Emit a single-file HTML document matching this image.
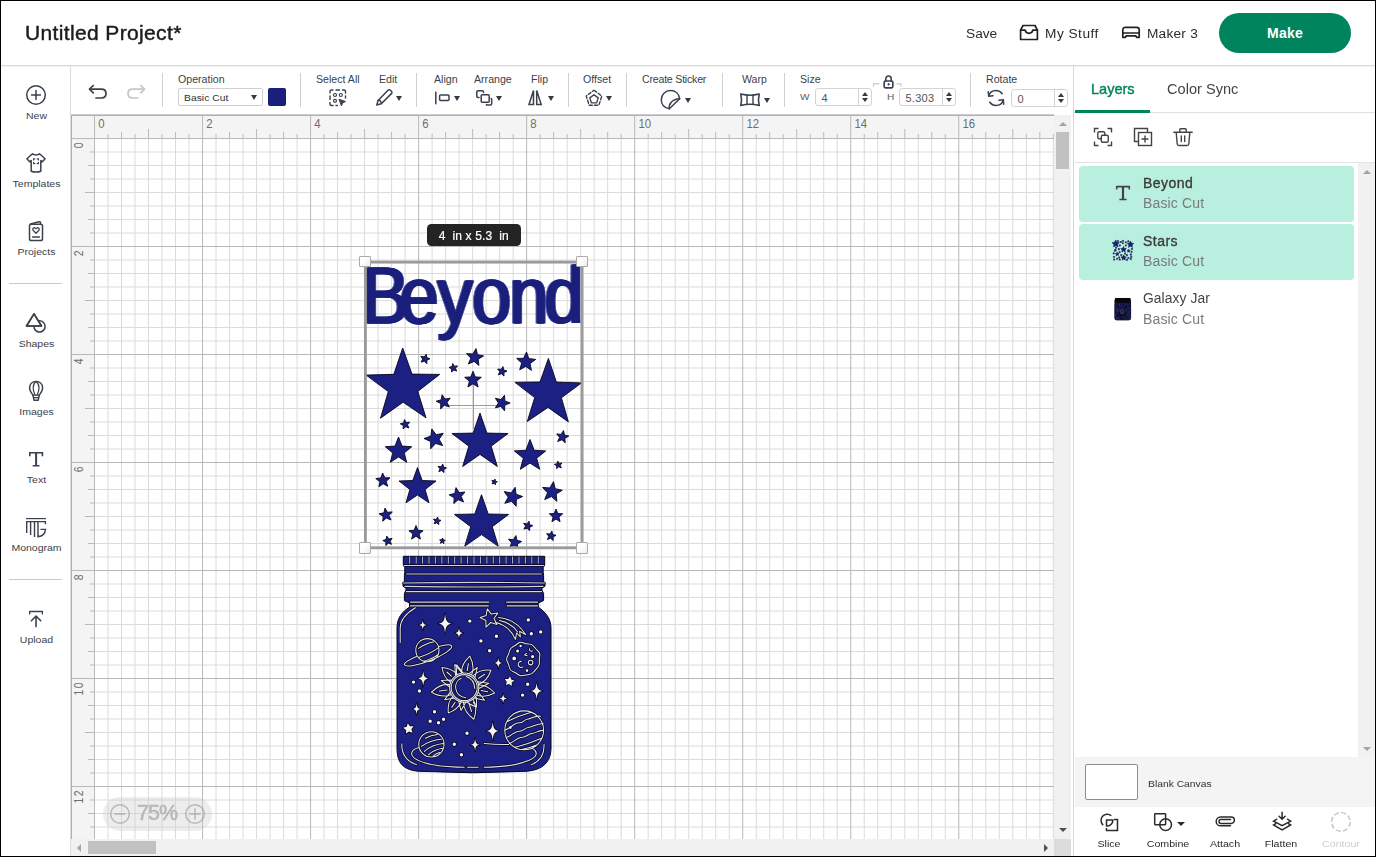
<!DOCTYPE html>
<html lang="en">
<head>
<meta charset="utf-8">
<title>Untitled Project* - Design Space</title>
<style>
*{box-sizing:border-box;margin:0;padding:0}
html,body{width:1376px;height:857px;overflow:hidden;background:#fff}
body{font-family:"Liberation Sans",Arial,sans-serif;color:#2f3540;-webkit-font-smoothing:antialiased}
#app{position:relative;width:1376px;height:857px;overflow:hidden;background:#fff}
.abs{position:absolute}
.layer{position:absolute;left:0;top:0;width:0;height:0}
.t{position:absolute;white-space:pre;line-height:1}
svg{display:block;overflow:visible}
#frame{position:absolute;left:0;top:0;width:1376px;height:857px;border:1px solid #000;border-bottom-width:1.5px;pointer-events:none;z-index:50}
/* header */
#hdr-line{position:absolute;left:1px;top:65px;width:1374px;height:1px;background:#d9d9d9;box-shadow:0 1px 1px rgba(0,0,0,.06)}
#title{will-change:transform;left:25.4px;top:22px;font-size:21px;letter-spacing:.36px;color:#1c1c1c;-webkit-text-stroke:.45px #1c1c1c}
.hl{font-size:13.7px;color:#2b2b2b;top:26.9px;will-change:transform}
#make{position:absolute;left:1219px;top:13px;width:132px;height:40px;border-radius:20px;background:#00845d;color:#fff;font-weight:700;font-size:14px;text-align:center;line-height:40px;letter-spacing:.2px}
/* sidebar */
#side-line{position:absolute;left:70px;top:66px;width:1px;height:790px;background:#dcdcdc}
.sl{position:absolute;left:1.6px;width:69px;text-align:center;font-size:9.7px;line-height:12px;color:#3a3f4a;transform:scaleX(1.085);transform-origin:50% 50%;margin-top:.9px}
.sdiv{position:absolute;left:9px;width:53px;height:1px;background:#c9c9c9}
.ic{position:absolute;stroke:#3a404c;fill:none;stroke-width:1.5;stroke-linecap:round;stroke-linejoin:round}
/* toolbar */
.tl{position:absolute;font-size:10px;line-height:12px;color:#3a3f4a;white-space:pre;transform:scaleX(1.06);transform-origin:0 50%;margin-left:-.4px}
.tsep{position:absolute;top:73px;width:1px;height:34px;background:#cfcfcf}
.car{position:absolute;width:0;height:0;border-left:3.5px solid transparent;border-right:3.5px solid transparent;border-top:5px solid #333a45}
.inp{position:absolute;height:18px;border:1px solid #d4d4d4;border-radius:3px;background:#fff;font-size:11px;line-height:18px;color:#555;padding-left:5.5px;letter-spacing:.25px}
.inp i{position:absolute;right:12px;top:0;width:1px;height:16px;background:#d4d4d4}
.inp b{position:absolute;right:3.2px;width:0;height:0;border-left:3.1px solid transparent;border-right:3.1px solid transparent}
.inp b.u{top:2.6px;border-bottom:4.6px solid #333a45}
.inp b.d{top:9.2px;border-top:4.6px solid #333a45}
/* canvas */
#canvas{position:absolute;left:0;top:0;width:0;height:0}
.rn{font-family:"Liberation Sans",Arial,sans-serif;font-size:12.4px;fill:#6e6e6e}
#cv-top{position:absolute;left:71px;top:114px;width:983px;height:2px;background:linear-gradient(#cdcdcd 0 50%,#b2b2b2 50% 100%)}
#cv-left{position:absolute;left:71px;top:115px;width:1px;height:724px;background:#b0b0b0}
/* panel */
#p-line{position:absolute;left:1073px;top:66px;width:1px;height:790px;background:#d6d6d6}
.ptab{will-change:transform;position:absolute;top:81px;font-size:15px;line-height:17px;white-space:pre}
.lay{position:absolute;left:1079px;width:275px;height:55.6px;border-radius:4px}
.lay.sel{background:#b9efde}
.ln{will-change:transform;position:absolute;left:1142.8px;font-size:14px;line-height:16px;white-space:pre;color:#3c3c3c}
.ln.b{font-weight:400;font-size:14px;letter-spacing:.48px;-webkit-text-stroke:.36px #3c3c3c;margin-top:-1px}
.ln.g{color:#7a7a7a;margin-top:-.2px;letter-spacing:.14px}
.bl{position:absolute;font-size:9.5px;line-height:12px;color:#2b2b2b;text-align:center;width:60px;white-space:pre;transform:scaleX(1.12);will-change:transform;margin-top:1.1px}
.hd{width:11.8px;height:11.8px;background:linear-gradient(135deg,#fff 40%,#ececec);border:1.5px solid #aaa;border-radius:1px}

</style>
</head>
<body>
<div id="app">
<div class="layer" id="header">
  <div class="t" id="title">Untitled Project*</div>
  <div class="t hl" style="left:966px">Save</div>
  <svg class="ic" style="left:1019px;top:24px;stroke:#222;stroke-width:1.7" width="20" height="17" viewBox="0 0 20 17"><path d="M1.6 6.2 4 1.5h12l2.4 4.7v9.3H1.6z"/><path d="M1.6 6.2h4.6c.3 2 1.8 3.1 3.8 3.1s3.5-1.1 3.8-3.1h4.6"/></svg>
  <div class="t hl" style="left:1044.8px;letter-spacing:.48px">My Stuff</div>
  <svg class="ic" style="left:1121px;top:26px;stroke:#222;stroke-width:1.7" width="20" height="13" viewBox="0 0 20 13"><path d="M1.8 7V3.8c0-1.5 1-2.5 2.5-2.5h11.4c1.5 0 2.5 1 2.5 2.5V7"/><path d="M1.8 7h16.4v4.3h-2.6l-.9-1.5H5.3l-.9 1.5H1.8z"/></svg>
  <div class="t hl" style="left:1147.4px;letter-spacing:.22px">Maker 3</div>
  <div id="make">Make</div>
  <div id="hdr-line"></div>
</div>

<div class="layer" id="sidebar">
  <div id="side-line"></div>
  <svg class="ic" style="left:25px;top:84px" width="22" height="22" viewBox="0 0 22 22"><circle cx="11" cy="11" r="9.3"/><path d="M11 6.5v9M6.5 11h9"/></svg>
  <div class="sl" style="top:109px">New</div>
  <svg class="ic" style="left:25px;top:152px" width="22" height="22" viewBox="0 0 22 22"><path d="M7.5 1.8c1 .9 2.2 1.2 3.5 1.2s2.5-.3 3.5-1.2l5.6 5-2.8 3-1.5-1.2v10.6c-1.5.6-3.1.8-4.8.8s-3.3-.2-4.8-.8V8.6L4.7 9.8l-2.8-3z"/><path d="M8.6 8v-1.2h1.2M12.2 6.8h1.2V8M13.4 10.4v1.2h-1.2M9.8 11.6H8.6v-1.2" stroke-width="1.2"/></svg>
  <div class="sl" style="top:177px">Templates</div>
  <svg class="ic" style="left:25px;top:219px" width="22" height="24" viewBox="0 0 22 24"><rect x="4.5" y="5.2" width="13" height="16.3" rx="1.8"/><path d="M5.5 5 14 2.8c.8-.2 1.4.2 1.5 1V5"/><path d="M11 14.2 8.3 11.5c-.7-.8-.6-1.8.1-2.4.8-.6 1.9-.4 2.6.6.7-1 1.8-1.2 2.6-.6.7.6.8 1.6.1 2.4z" stroke-width="1.3"/><path d="M7.5 18h7" stroke-width="1.3"/></svg>
  <div class="sl" style="top:245px">Projects</div>
  <div class="sdiv" style="top:283px"></div>
  <svg class="ic" style="left:25px;top:311px" width="22" height="24" viewBox="0 0 22 24"><circle cx="14.5" cy="15.4" r="5.6"/><path d="M9 2.8 16.5 15H1.5z" fill="#fff"/><path d="M9 2.8 16.5 15H1.5z"/></svg>
  <div class="sl" style="top:337px">Shapes</div>
  <svg class="ic" style="left:25px;top:379px;stroke-width:1.5" width="22" height="24" viewBox="0 0 22 24"><path d="M11.1 2.4c3.9 0 6.5 2.7 6.5 6.3 0 2.9-1.6 5-3.3 7.3l-1.2 5.3H9.1L7.9 16C6.2 13.7 4.6 11.6 4.6 8.7c0-3.6 2.6-6.3 6.5-6.3z"/><path d="M11.1 2.4c-2 1.4-2.9 3.8-2.9 6.3 0 2.6.8 5.2 1.8 7.3M11.1 2.4c2 1.4 2.9 3.8 2.9 6.3 0 2.6-.8 5.2-1.8 7.3" stroke-width="1.2"/><path d="M8 16.1h6.2M8.7 18.7h4.8" stroke-width="1.2"/></svg>
  <div class="sl" style="top:405px">Images</div>
  <svg class="ic" style="left:25px;top:449px;stroke-width:1.6;stroke-linecap:butt;stroke-linejoin:miter" width="22" height="22" viewBox="0 0 22 22"><path d="M4.8 7.2V3.8h12.6v3.4M7.7 16.7h6.8"/><path d="M11.1 3.8v12.9" stroke-width="2"/></svg>
  <div class="sl" style="top:473px">Text</div>
  <svg class="ic" style="left:24px;top:516px;stroke-linecap:butt;stroke-linejoin:miter;stroke-width:1.4" width="24" height="24" viewBox="0 0 24 24"><path d="M2 2.6h20" stroke-width="1.2"/><path d="M2 5.6h20M2.7 5.6v11.5M6.6 5.6v13.4M10.5 5.6v15.4M14 5.6v15.2c4.3-.6 7.2-3.5 7.5-7.4h-5M21.4 5.6v2.6"/></svg>
  <div class="sl" style="top:541px">Monogram</div>
  <div class="sdiv" style="top:579px"></div>
  <svg class="ic" style="left:25px;top:609px;stroke-width:1.6;stroke-linecap:butt;stroke-linejoin:miter" width="22" height="22" viewBox="0 0 22 22"><path d="M4.7 5.6V2.5h12.7v3.1" stroke-width="1.3"/><path d="M11.05 17.6V7.2M6.4 11.7l4.65-4.65 4.65 4.65" stroke-linecap="round" stroke-linejoin="round"/></svg>
  <div class="sl" style="top:633px">Upload</div>
</div>

<div class="layer" id="toolbar">
  <svg class="ic" style="left:87px;top:83px;stroke-width:1.7" width="22" height="18" viewBox="0 0 22 18"><path d="M6.3 2.5 2.5 6.2l3.8 3.7"/><path d="M2.8 6.2h11.7c2.8 0 4.5 1.8 4.5 4.4s-1.7 4.4-4.5 4.4H9"/></svg>
  <svg class="ic" style="left:125px;top:83px;stroke-width:1.7;stroke:#c3c5c9" width="22" height="18" viewBox="0 0 22 18"><path d="M15.7 2.5l3.8 3.7-3.8 3.7"/><path d="M19.2 6.2H7.5C4.7 6.2 3 8 3 10.6S4.7 15 7.5 15H13"/></svg>
  <div class="tsep" style="left:162px"></div>

  <div class="tl" style="left:178.5px;top:73.9px">Operation</div>
  <div class="abs" style="left:178px;top:88px;width:85px;height:18px;border:1px solid #d0d0d0;border-radius:2px;background:#fff"></div>
  <div class="tl" style="left:183.9px;top:91.9px;font-size:9.6px;transform:scaleX(1.08);color:#333">Basic Cut</div>
  <div class="car" style="left:250.5px;top:95px"></div>
  <div class="abs" style="left:268px;top:88px;width:18px;height:18px;border-radius:2px;background:#1b1f7c"></div>
  <div class="tsep" style="left:300px"></div>

  <div class="tl" style="left:316px;top:73.9px">Select All</div>
  <svg class="ic" style="left:328px;top:88px;stroke-width:1.4" width="20" height="20" viewBox="0 0 20 20"><path d="M2 5V3.5C2 2.6 2.6 2 3.5 2H5M8 2h3.5M14.5 2H16c.9 0 1.5.6 1.5 1.5V5M17.5 8v2M2 8v3.5M2 14.5V16c0 .9.6 1.5 1.5 1.5H5M8 17.5h1.5"/><circle cx="7" cy="7" r="1.5" stroke-width="1.2"/><circle cx="12.8" cy="7" r="1.5" stroke-width="1.2"/><circle cx="7" cy="12.8" r="1.5" stroke-width="1.2"/><path d="M11.3 11.3l6.2 2.3-2.7 1.1-1.2 2.8z" fill="#3a404c" stroke-width="1"/></svg>
  <div class="tl" style="left:379.5px;top:73.9px">Edit</div>
  <svg class="ic" style="left:375px;top:88px;stroke-width:1.5" width="20" height="20" viewBox="0 0 20 20"><path d="M13 2.2c.7-.7 1.7-.7 2.4 0l1 1c.7.7.7 1.7 0 2.4L6.3 15.7 1.8 17l1.3-4.5z"/><path d="M3.3 12.3c1.5-.2 2.9 1.1 3 3.2"/></svg>
  <div class="car" style="left:395.5px;top:95.5px"></div>
  <div class="tsep" style="left:416px"></div>

  <div class="tl" style="left:434px;top:73.9px">Align</div>
  <svg class="ic" style="left:433px;top:88px;stroke-width:1.5" width="20" height="20" viewBox="0 0 20 20"><path d="M2.8 4.2v11.6"/><rect x="6.6" y="7" width="9.4" height="5.6" rx="1"/></svg>
  <div class="car" style="left:453.5px;top:95.5px"></div>
  <div class="tl" style="left:474px;top:73.9px">Arrange</div>
  <svg class="ic" style="left:474px;top:88px;stroke-width:1.5" width="20" height="20" viewBox="0 0 20 20"><rect x="7.2" y="6.8" width="8" height="7.5" rx="1"/><path d="M5 9.5H4c-.8 0-1.2-.4-1.2-1.2V4c0-.8.4-1.2 1.2-1.2h4.3c.8 0 1.2.4 1.2 1.2v.6M12.5 16.5v.5h4c.8 0 1.2-.4 1.2-1.2v-4.3c0-.4-.2-.8-.5-1"/></svg>
  <div class="car" style="left:495.5px;top:95.5px"></div>
  <div class="tl" style="left:531.5px;top:73.9px">Flip</div>
  <svg class="ic" style="left:526px;top:88px;stroke-width:1.5;stroke-linejoin:miter" width="20" height="20" viewBox="0 0 20 20"><path d="M7.5 2.5v14H3zM10.7 2.5v14h4.5z"/></svg>
  <div class="car" style="left:547.5px;top:95.5px"></div>
  <div class="tsep" style="left:568px"></div>

  <div class="tl" style="left:583.5px;top:73.9px">Offset</div>
  <svg class="ic" style="left:584px;top:88px;stroke-width:1.4" width="20" height="20" viewBox="0 0 20 20"><path d="M10 2.2 17.8 8l-3 9.3H5.2L2.2 8z" stroke-dasharray="3.2 2"/><path d="M10 6.8l4.2 3.1-1.6 5H7.4l-1.6-5z"/></svg>
  <div class="car" style="left:605.5px;top:95.5px"></div>
  <div class="tsep" style="left:626px"></div>

  <div class="tl" style="left:642px;top:73.9px;letter-spacing:-.2px">Create Sticker</div>
  <svg class="ic" style="left:659px;top:88px;stroke-width:1.5" width="24" height="24" viewBox="0 0 24 24"><path d="M10.3 20.8C5.2 20 2.3 16.3 2.3 11.8 2.3 6.5 6.3 2.6 11.5 2.6c4.8 0 8.6 3 9.2 8.2z"/><path d="M10.3 20.8c-.8-4.8 2.6-9.6 10.4-10"/></svg>
  <div class="car" style="left:684.5px;top:97.5px"></div>
  <div class="tsep" style="left:722px"></div>

  <div class="tl" style="left:742px;top:73.9px">Warp</div>
  <svg class="ic" style="left:738px;top:90px;stroke-width:1.6" width="24" height="20" viewBox="0 0 24 20"><path d="M2.8 4c6.2 1.6 12.2 1.6 18.4 0-1 4-1 7.5 0 11.5-6.2-1.6-12.2-1.6-18.4 0 1-4 1-7.5 0-11.5z"/><path d="M9 5.2v9.1M15 5.2v9.1" stroke-width="1.4"/></svg>
  <div class="car" style="left:763.5px;top:97.5px"></div>
  <div class="tsep" style="left:784px"></div>

  <div class="tl" style="left:800.5px;top:73.9px">Size</div>
  <div class="tl" style="left:800.6px;top:91.4px;font-size:9.5px;color:#5c5c5c">W</div>
  <div class="inp" style="left:815px;top:88px;width:57px">4<i></i><b class="u"></b><b class="d"></b></div>
  <svg class="ic" style="left:871.6px;top:73.5px;stroke-width:1.5" width="32" height="18" viewBox="0 0 32 18"><path d="M1.5 12.5V9.8h6M29 12.5V9.8h-4.5" stroke="#bdbdbd" stroke-width="1" stroke-linecap="butt"/><rect x="12.2" y="7" width="8.6" height="6.8" rx="1.2" stroke-width="1.7"/><path d="M13.8 7V4.8c0-1.8 1.1-2.8 2.7-2.8s2.7 1 2.7 2.8V7" stroke-width="1.6"/><circle cx="16.5" cy="10.3" r=".7" fill="#3a404c" stroke-width="1"/></svg>
  <div class="tl" style="left:887.2px;top:91.4px;font-size:9.5px;color:#5c5c5c">H</div>
  <div class="inp" style="left:899px;top:88px;width:57px">5.303<i></i><b class="u"></b><b class="d"></b></div>
  <div class="tsep" style="left:970px"></div>

  <div class="tl" style="left:986.5px;top:73.9px">Rotate</div>
  <svg class="ic" style="left:986px;top:88px;stroke-width:1.5" width="20" height="20" viewBox="0 0 20 20"><path d="M2.8 8.2C3.6 4.8 6.4 2.6 10 2.6c2.6 0 4.8 1.2 6.2 3.2M17.2 11.8c-.8 3.4-3.6 5.6-7.2 5.6-2.6 0-4.8-1.2-6.2-3.2"/><path d="M2.3 3.8l.4 4.5 4.3-.6M17.7 16.2l-.4-4.5-4.3.6"/></svg>
  <div class="inp" style="left:1011px;top:89px;width:57px">0<i></i><b class="u"></b><b class="d"></b></div>
</div>

<div id="canvas">
<svg class="abs" style="left:71px;top:115px" width="983" height="724" viewBox="71 115 983 724">
<rect x="71" y="115" width="983" height="724" fill="#fff"/>
<rect x="71" y="115" width="983" height="23.5" fill="#f4f4f4"/>
<rect x="71" y="115" width="23.5" height="724" fill="#f4f4f4"/>
<path d="M108 139V839M121.51 139V839M135.01 139V839M148.52 139V839M162.02 139V839M175.53 139V839M189.03 139V839M216.04 139V839M229.55 139V839M243.05 139V839M256.55 139V839M270.06 139V839M283.56 139V839M297.07 139V839M324.08 139V839M337.58 139V839M351.09 139V839M364.59 139V839M378.09 139V839M391.6 139V839M405.1 139V839M432.11 139V839M445.62 139V839M459.12 139V839M472.63 139V839M486.13 139V839M499.63 139V839M513.14 139V839M540.15 139V839M553.65 139V839M567.16 139V839M580.66 139V839M594.17 139V839M607.67 139V839M621.18 139V839M648.18 139V839M661.69 139V839M675.19 139V839M688.7 139V839M702.2 139V839M715.71 139V839M729.21 139V839M756.22 139V839M769.73 139V839M783.23 139V839M796.73 139V839M810.24 139V839M823.74 139V839M837.25 139V839M864.26 139V839M877.76 139V839M891.27 139V839M904.77 139V839M918.27 139V839M931.78 139V839M945.28 139V839M972.29 139V839M985.8 139V839M999.3 139V839M1012.81 139V839M1026.31 139V839M1039.82 139V839M1053.32 139V839M95 152H1054M95 165.5H1054M95 179H1054M95 192.5H1054M95 206H1054M95 219.5H1054M95 233H1054M95 260H1054M95 273.5H1054M95 287H1054M95 300.5H1054M95 314H1054M95 327.5H1054M95 341H1054M95 368H1054M95 381.5H1054M95 395H1054M95 408.5H1054M95 422H1054M95 435.5H1054M95 449H1054M95 476H1054M95 489.5H1054M95 503H1054M95 516.5H1054M95 530H1054M95 543.5H1054M95 557H1054M95 584H1054M95 597.5H1054M95 611H1054M95 624.5H1054M95 638H1054M95 651.5H1054M95 665H1054M95 692H1054M95 705.5H1054M95 719H1054M95 732.5H1054M95 746H1054M95 759.5H1054M95 773H1054M95 800H1054M95 813.5H1054M95 827H1054" stroke="#dbdbdb" stroke-width="1" fill="none"/>
<path d="M108 134V138M121.51 132V138M135.01 134V138M148.52 129V138M162.02 134V138M175.53 132V138M189.03 134V138M216.04 134V138M229.55 132V138M243.05 134V138M256.55 129V138M270.06 134V138M283.56 132V138M297.07 134V138M324.08 134V138M337.58 132V138M351.09 134V138M364.59 129V138M378.09 134V138M391.6 132V138M405.1 134V138M432.11 134V138M445.62 132V138M459.12 134V138M472.63 129V138M486.13 134V138M499.63 132V138M513.14 134V138M540.15 134V138M553.65 132V138M567.16 134V138M580.66 129V138M594.17 134V138M607.67 132V138M621.18 134V138M648.18 134V138M661.69 132V138M675.19 134V138M688.7 129V138M702.2 134V138M715.71 132V138M729.21 134V138M756.22 134V138M769.73 132V138M783.23 134V138M796.73 129V138M810.24 134V138M823.74 132V138M837.25 134V138M864.26 134V138M877.76 132V138M891.27 134V138M904.77 129V138M918.27 134V138M931.78 132V138M945.28 134V138M972.29 134V138M985.8 132V138M999.3 134V138M1012.81 129V138M1026.31 134V138M1039.82 132V138M1053.32 134V138M90 152H94M88 165.5H94M90 179H94M85 192.5H94M90 206H94M88 219.5H94M90 233H94M90 260H94M88 273.5H94M90 287H94M85 300.5H94M90 314H94M88 327.5H94M90 341H94M90 368H94M88 381.5H94M90 395H94M85 408.5H94M90 422H94M88 435.5H94M90 449H94M90 476H94M88 489.5H94M90 503H94M85 516.5H94M90 530H94M88 543.5H94M90 557H94M90 584H94M88 597.5H94M90 611H94M85 624.5H94M90 638H94M88 651.5H94M90 665H94M90 692H94M88 705.5H94M90 719H94M85 732.5H94M90 746H94M88 759.5H94M90 773H94M90 800H94M88 813.5H94M90 827H94" stroke="#b9b9b9" stroke-width="1" fill="none"/>
<path d="M94.5 116V839M202.54 116V839M310.57 116V839M418.61 116V839M526.64 116V839M634.68 116V839M742.72 116V839M850.75 116V839M958.79 116V839M72 138.5H1054M72 246.5H1054M72 354.5H1054M72 462.5H1054M72 570.5H1054M72 678.5H1054M72 786.5H1054" stroke="#b9b9b9" stroke-width="1" fill="none"/>
<text transform="translate(98.2 128.2) scale(.92 1)" class="rn">0</text>
<text transform="translate(206.24 128.2) scale(.92 1)" class="rn">2</text>
<text transform="translate(314.27 128.2) scale(.92 1)" class="rn">4</text>
<text transform="translate(422.31 128.2) scale(.92 1)" class="rn">6</text>
<text transform="translate(530.34 128.2) scale(.92 1)" class="rn">8</text>
<text transform="translate(638.38 128.2) scale(.92 1)" class="rn">10</text>
<text transform="translate(746.42 128.2) scale(.92 1)" class="rn">12</text>
<text transform="translate(854.45 128.2) scale(.92 1)" class="rn">14</text>
<text transform="translate(962.49 128.2) scale(.92 1)" class="rn">16</text>
<text transform="translate(83.3 142.5) rotate(-90) scale(.84 1.06)" x="-6.9" class="rn">0</text>
<text transform="translate(83.3 250.5) rotate(-90) scale(.84 1.06)" x="-6.9" class="rn">2</text>
<text transform="translate(83.3 358.5) rotate(-90) scale(.84 1.06)" x="-6.9" class="rn">4</text>
<text transform="translate(83.3 466.5) rotate(-90) scale(.84 1.06)" x="-6.9" class="rn">6</text>
<text transform="translate(83.3 574.5) rotate(-90) scale(.84 1.06)" x="-6.9" class="rn">8</text>
<text transform="translate(83.3 682.5) rotate(-90) scale(.84 1.06)" x="-15.53 -6.9" class="rn">10</text>
<text transform="translate(83.3 790.5) rotate(-90) scale(.84 1.06)" x="-15.53 -6.9" class="rn">12</text>
</svg>
<svg class="abs" style="left:0;top:0" width="1376" height="857" viewBox="0 0 1376 857">
  <text x="414.29 457.19 500.57 539.9 582.49 622.57" y="323" transform="scale(0.875 1)" style="font-family:'Liberation Sans',Arial,sans-serif;font-weight:400;font-size:80px;filter:drop-shadow(1.2px 0 0 #1b1f7c) drop-shadow(-1.2px 0 0 #1b1f7c)" fill="#1b1f7c" stroke="#1b1f7c" stroke-width="0.8">Beyond</text>
  <path d="M473.5 380V429M449 405.5H497" stroke="#9c9c9c" stroke-width="1" fill="none"/><path d="M402.7 348L412 374.1L439.7 374.4L417.8 391.4L426 417.8L403.1 402.2L380.5 418.2L388.3 391.6L366.1 375.1L393.8 374.3ZM548.4 358.4L556.4 382.1L581.5 382.9L561.4 397.8L568.4 421.9L548 407.4L527.3 421.5L534.7 397.6L514.9 382.3L540 382ZM480 413.1L486.9 433.1L508.1 433.5L491.2 446.2L497.3 466.5L480 454.4L462.7 466.5L468.8 446.2L451.9 433.5L473.1 433.1ZM481.5 494.7L488.2 514L508.6 514.4L492.3 526.7L498.3 546.3L481.5 534.6L464.7 546.3L470.7 526.7L454.4 514.4L474.8 514ZM417.5 467.5L422.2 480.5L436 481L425.1 489.5L429 502.8L417.5 495L406 502.8L409.9 489.5L399 481L412.8 480.5ZM398.5 437L402 446.1L411.8 446.7L404.2 452.9L406.7 462.3L398.5 457L390.3 462.3L392.8 452.9L385.2 446.7L395 446.1ZM530 439.5L534.2 450.3L545.7 450.9L536.7 458.2L539.7 469.3L530 463.1L520.3 469.3L523.3 458.2L514.3 450.9L525.8 450.3ZM431.8 428.9L436.2 434.7L443.3 433.3L439.1 439.2L442.7 445.6L435.7 443.5L430.7 448.8L430.6 441.5L424 438.5L430.9 436.1ZM526.5 352L528.8 358.6L535.7 359.4L530.1 363.6L531.4 370.4L525.8 366.4L519.7 369.8L521.7 363.1L516.7 358.4L523.6 358.3ZM476 348.6L477.5 354.7L483.6 355.9L478.3 359.2L478.9 365.4L474.1 361.4L468.4 364L470.8 358.2L466.6 353.6L472.8 354ZM473 371.3L475.3 376.9L481.3 377.3L476.6 381.2L478.1 387L473 383.8L467.9 387L469.4 381.2L464.7 377.3L470.7 376.9ZM442.1 394.7L445 399L450.2 398.2L447 402.3L449.3 407L444.4 405.2L440.6 408.9L440.8 403.6L436.2 401.2L441.2 399.8ZM504.5 395.2L504.9 400.9L510.2 403L504.9 405.1L504.5 410.8L500.9 406.4L495.4 407.8L498.4 403L495.4 398.2L500.9 399.6ZM553.5 481.6L555.2 488.7L562.3 490.2L556.2 494L556.9 501.3L551.4 496.6L544.7 499.6L547.5 492.8L542.6 487.4L549.8 487.9ZM515.2 487.3L516 494.2L522.6 496.5L516.3 499.4L516.2 506.3L511.5 501.3L504.8 503.3L508.2 497.2L504.2 491.6L511 492.9ZM456 487.6L459.1 492.6L465 492L461.2 496.5L463.6 501.9L458.1 499.7L453.8 503.6L454.2 497.8L449.1 494.8L454.8 493.4ZM382.6 473L384.8 477.7L390 477.8L386.2 481.4L387.7 486.3L383.2 483.8L378.9 486.8L379.9 481.7L375.8 478.6L380.9 477.9ZM385 508.1L387.4 512.3L392.3 511.9L389 515.5L390.9 520L386.4 518.1L382.7 521.2L383.2 516.4L379.1 513.8L383.9 512.8ZM416 525.5L417.9 530.3L423.1 530.7L419.1 534L420.4 539.1L416 536.3L411.6 539.1L412.9 534L408.9 530.7L414.1 530.3ZM556 509L557.8 513.5L562.7 513.8L558.9 517L560.1 521.7L556 519.1L551.9 521.7L553.1 517L549.3 513.8L554.2 513.5ZM563.5 430.6L564.5 435L568.8 436.1L564.9 438.3L565.2 442.8L561.9 439.8L557.7 441.5L559.6 437.4L556.7 433.9L561.1 434.4ZM426.3 354.2L426.7 357.6L430 358.7L426.9 360.2L426.8 363.7L424.4 361.2L421.1 362.1L422.8 359.1L420.8 356.3L424.2 356.9ZM452.7 363.6L454.4 366.2L457.5 365.9L455.5 368.3L456.7 371.1L453.9 370L451.5 372L451.7 369L449 367.4L452 366.6ZM503 366.6L503.7 370L507 371L503.9 372.6L504 376.1L501.5 373.7L498.3 374.8L499.8 371.7L497.7 369L501.1 369.4ZM404.4 419.6L406.3 422.5L409.7 422.2L407.5 424.8L408.9 428L405.7 426.7L403.1 429L403.3 425.6L400.3 423.8L403.7 422.9ZM442.8 464.1L443.5 467.1L446.5 467.9L443.8 469.5L444 472.5L441.6 470.5L438.8 471.6L440 468.8L438 466.4L441.1 466.7ZM495.1 479.1L495.3 481.2L497.3 481.8L495.4 482.7L495.4 484.8L494 483.3L492 483.9L493 482.1L491.8 480.4L493.8 480.7ZM557.7 461.1L559.2 463.4L561.9 463.1L560.2 465.3L561.3 467.8L558.7 466.8L556.6 468.6L556.8 465.8L554.4 464.4L557.1 463.7ZM437.7 517.1L438.3 519.7L441 520.4L438.6 521.8L438.8 524.6L436.7 522.8L434.1 523.8L435.2 521.3L433.5 519.1L436.2 519.4ZM386.8 536.1L388.7 538.9L392.1 538.5L390 541.2L391.5 544.3L388.3 543.2L385.8 545.6L385.9 542.1L382.8 540.5L386.1 539.5ZM442.7 538L443.3 540L445.3 540.3L443.6 541.5L443.9 543.6L442.3 542.3L440.4 543.3L441.1 541.3L439.6 539.8L441.7 539.8ZM515.9 535.6L517 540.3L521.6 541.5L517.5 544L517.8 548.8L514.2 545.6L509.7 547.4L511.6 542.9L508.5 539.2L513.3 539.7ZM529.1 521.2L529.5 524.6L532.8 525.7L529.7 527.2L529.6 530.7L527.2 528.2L523.9 529.1L525.6 526.1L523.6 523.3L527 523.9ZM551.9 531.1L552.6 534.4L556 535.3L553 537.1L553.2 540.5L550.6 538.2L547.4 539.5L548.8 536.3L546.6 533.7L550 534Z" fill="#1c2082" stroke="#06071f" stroke-width="0.9" stroke-linejoin="miter"/>
  <g id="jar">
<path d="M403.3 556.3H544.7V564.6L543.2 566.6V572.4L543.6 575.4V581.2L545 583.6V586.2L542 587.6V590.4L543.6 593.4V600.6L538.2 603V607C545 612 551 618 551 628V748C551 762 543 770 526 771.3Q472.5 774.2 419 771.3C402 770 397 762 397 748V628C397 618 402 612 409.6 607V603L404.4 600.6V593.4L406 590.4V587.6L403 586.2V583.6L404.4 581.2V575.4L404.8 572.4V566.6L403.3 564.6Z" fill="#1c2082" stroke="#05051a" stroke-width="1" stroke-linejoin="round"/>
<path d="M409.7 556.6V563.6M416.2 556.6V563.6M422.6 556.6V563.6M429 556.6V563.6M435.4 556.6V563.6M441.9 556.6V563.6M448.3 556.6V563.6M454.7 556.6V563.6M461.1 556.6V563.6M467.6 556.6V563.6M474 556.6V563.6M480.4 556.6V563.6M486.9 556.6V563.6M493.3 556.6V563.6M499.7 556.6V563.6M506.1 556.6V563.6M512.6 556.6V563.6M519 556.6V563.6M525.4 556.6V563.6M531.8 556.6V563.6M538.3 556.6V563.6" stroke="#05051a" stroke-width="2.1" fill="none"/>
<path d="M409.7 556.6V563.6M416.2 556.6V563.6M422.6 556.6V563.6M429 556.6V563.6M435.4 556.6V563.6M441.9 556.6V563.6M448.3 556.6V563.6M454.7 556.6V563.6M461.1 556.6V563.6M467.6 556.6V563.6M474 556.6V563.6M480.4 556.6V563.6M486.9 556.6V563.6M493.3 556.6V563.6M499.7 556.6V563.6M506.1 556.6V563.6M512.6 556.6V563.6M519 556.6V563.6M525.4 556.6V563.6M531.8 556.6V563.6M538.3 556.6V563.6" stroke="#d4d4d8" stroke-width=".9" fill="none"/>
<path d="M404.4 565.5H543.6M406.6 574H541.4M403.6 583Q474 581.6 544.4 583M405 586.4Q474 587.6 543 586.4M406.4 591.6H541.6M410.4 602.1H489M506.6 602.1H537.6M410.4 605.9H488.4M507.2 605.9H537.6" stroke="#05051a" stroke-width="2.6" fill="none" stroke-linecap="round"/>
<path d="M404.4 565.5H543.6M406.6 574H541.4M403.6 583Q474 581.6 544.4 583M405 586.4Q474 587.6 543 586.4M406.4 591.6H541.6M410.4 602.1H489M506.6 602.1H537.6M410.4 605.9H488.4M507.2 605.9H537.6" stroke="#d6d6d6" stroke-width="1.15" fill="none" stroke-linecap="round"/>
<path d="M415.4 607.8C405 614 400.4 620 400.2 628V642.6M401.8 743.8C401.6 752 404.6 760.6 416.4 764.6M544 744.4C544.4 752 542 760.6 531.2 764.8M419 747.6C411 749.6 409.6 754.4 414.6 758.4C424 764.6 444 767 464.2 767.3M467.6 767.3H478.2M484.2 767.3C502 767 518 765 528.6 760.6C537 757 538.6 752.4 532.8 748.6M484.2 743.4Q496 744.6 508.6 744.4M487.3 608.9L491.3 614.1L497.7 613.1L494 618.5L497 624.4L490.7 622.5L486 627.1L485.9 620.5L480 617.5L486.2 615.4ZM498.6 617.4C510 618.4 519 624 525.6 634.6L519.6 631.2 520.4 637 516.6 633 515.4 639.4C511.6 630.6 505 624.6 495.2 622.2M499.6 620.4C507.6 622 513.4 626 517.6 632M415.8 650.2a11.6 11.6 0 1 0 23.2 0a11.6 11.6 0 1 0 -23.2 0ZM416.4 656.4C409 659.6 403.6 663 404.4 664.8C405.6 667.4 418 665.4 431 660.2C444 655 452.6 648.6 451.6 646C450.8 644.2 445.6 644.6 438.6 646.4M418.6 648.4Q426 643.2 433.6 642M418.4 657.4Q430 654 438.6 647.6M423.4 661.2Q433 658.8 438.2 654.4M449.6 687.6a14.6 14.6 0 1 0 29.2 0a14.6 14.6 0 1 0 -29.2 0ZM451.2 687.6a13 13 0 1 0 26 0a13 13 0 1 0 -26 0ZM461.2 678.2C453.2 681.6 453.2 695.6 465.8 697.8M466.2 676.6C472.2 678.6 474.6 683.6 474.8 688.6M461.6 672.6Q461.2 664 469.8 656.1Q475.1 666.4 471.8 674.4M467.2 670.7L468.4 663.5M473.4 675.5Q479.4 669.3 491 670.2Q487.1 681.1 479 684.1M478.6 678.2L484.7 674.3M479.2 685Q487.3 684.9 494.7 693Q485 698 477.4 695.2M481.1 690.6L487.7 691.7M476.1 697Q476.9 701.7 476.4 707.1Q471.3 705.2 467.4 702.5M473.3 702.2L474.5 704.1M473.3 699.8Q478.1 707.6 473.8 719.2Q463.8 712 463.5 702.8M469.2 704L471.5 711.5M461 702.5Q457.9 709.4 448.3 713Q447.3 702.8 452.3 697M455.1 702.2L451.8 707.4M450.8 694.7Q442.3 698.2 431.5 692.2Q440.2 683.4 449.3 684.5M447.2 690L439.5 691.1M450.1 681.9Q443.8 677.6 441.9 667.5Q452.1 668.4 457 674.2M451.4 676.1L446.9 672M456.4 674.5L456.8 664.8L462.8 672.5M469.4 673.3L477.3 667.5L475.1 677M478.2 681.7L488.8 683.3L479.4 688.3M478.6 692.6L484.6 700.3L475 698.3M465.5 702.7L461 710.4L458.8 701.8M453.4 698.3L444.7 699.8L449.8 692.6M449 686.5L441.2 680.6L451 680M455.5 675.1L454.8 664.4L461.8 672.6M539.7 656.1Q539.1 659.2 539.4 662.2Q539.6 665.1 537.7 667.3Q535.7 669.5 533.8 671.8Q532 674.1 529.1 674.5Q526.2 674.9 523.3 675.6Q520.4 676.4 518 674.5Q515.7 672.6 512.8 671.6Q509.9 670.5 509.4 667.5Q508.9 664.5 507.4 661.8Q505.9 659.2 507.4 656.6Q508.9 653.9 509.5 651Q510.2 648.2 512.9 646.8Q515.5 645.5 517.9 643.5Q520.3 641.5 523.2 642.7Q526.1 643.9 529.1 644.1Q532.1 644.2 533.9 646.5Q535.7 648.9 538 651Q540.4 653 539.7 656.1ZM528.3 662.6a2.3 2.3 0 1 0 4.6 0a2.3 2.3 0 1 0 -4.6 0ZM521.4 661.4a3 3 0 1 0 1.6 5.4M526.6 653.4l-2 1.6 2.6.8M529.6 648.8a1.8 1.8 0 0 0 2.8 2M504.8 730.3a19.4 19.4 0 1 0 38.8 0a19.4 19.4 0 1 0 -38.8 0ZM507.2 721.6Q518 716 530.6 712.6M505.4 730C512 727 515 722.4 519.4 722.8C523 723 524 719.4 528 719C532 718.6 533.6 715.4 540.6 716.2M506.4 737.6C512 735.4 515 731 519.4 731.2C523 731.4 525 727.6 529 727.2C533 726.8 536 723.6 543 723.4M509.4 743.6C515 741 518 737 522.4 737.2C526 737.4 528 734 532 733.6C536 733.2 538 730 543.4 730.4M514.4 747.4Q528 744 541 738.4M521.6 749.4Q530 748 536.6 745M418.8 744.4a12.6 12.6 0 1 0 25.2 0a12.6 12.6 0 1 0 -25.2 0ZM425.4 738.2Q431 735.4 437.4 734.6M421.4 746.4Q430 740 441.4 739.2M424.4 751.4Q432 744.6 443.4 743.6M428.4 754.8Q434 749.4 443 748.2M433 756.4Q436.4 753 439.6 752.4" stroke="#05051a" stroke-width="2.5" fill="none" stroke-linecap="round" stroke-linejoin="round"/>
<path d="M422.8 620.1C423.1 623.7 423.9 624.7 426.8 625.1C423.9 625.5 423.1 626.5 422.8 630.1C422.5 626.5 421.7 625.5 418.8 625.1C421.7 624.7 422.5 623.7 422.8 620.1ZM445.1 613.4C445.6 620.7 447 622.8 451.9 623.6C447 624.4 445.6 626.5 445.1 633.8C444.6 626.5 443.2 624.4 438.3 623.6C443.2 622.8 444.6 620.7 445.1 613.4ZM459 627.5C459.3 631.5 460.2 632.7 463.3 633.1C460.2 633.5 459.3 634.7 459 638.7C458.7 634.7 457.8 633.5 454.7 633.1C457.8 632.7 458.7 631.5 459 627.5ZM498.3 657.4C498.6 661.3 499.4 662.5 502.3 662.9C499.4 663.3 498.6 664.5 498.3 668.4C498 664.5 497.2 663.3 494.3 662.9C497.2 662.5 498 661.3 498.3 657.4ZM423.2 670.6C423.6 676.3 424.8 678 428.7 678.6C424.8 679.2 423.6 680.9 423.2 686.6C422.8 680.9 421.6 679.2 417.7 678.6C421.6 678 422.8 676.3 423.2 670.6ZM536.6 682.6C537.1 688.7 538.3 690.4 542.6 691.1C538.3 691.8 537.1 693.5 536.6 699.6C536.1 693.5 534.9 691.8 530.6 691.1C534.9 690.4 536.1 688.7 536.6 682.6ZM503.2 693.4C503.5 697 504.3 698 507.2 698.4C504.3 698.8 503.5 699.8 503.2 703.4C502.9 699.8 502.1 698.8 499.2 698.4C502.1 698 502.9 697 503.2 693.4ZM416.6 702.9C416.9 707.2 417.7 708.4 420.6 708.9C417.7 709.4 416.9 710.6 416.6 714.9C416.3 710.6 415.5 709.4 412.6 708.9C415.5 708.4 416.3 707.2 416.6 702.9ZM492.7 721.4C493.2 728.2 494.6 730.2 499.2 730.9C494.6 731.6 493.2 733.6 492.7 740.4C492.2 733.6 490.8 731.6 486.2 730.9C490.8 730.2 492.2 728.2 492.7 721.4ZM475.1 738.3C475.5 742.9 476.4 744.3 479.6 744.8C476.4 745.3 475.5 746.7 475.1 751.3C474.7 746.7 473.8 745.3 470.6 744.8C473.8 744.3 474.7 742.9 475.1 738.3ZM468.1 621.1a1.7 1.7 0 1 0 3.4 0a1.7 1.7 0 1 0 -3.4 0ZM494.7 636.2a1.7 1.7 0 1 0 3.4 0a1.7 1.7 0 1 0 -3.4 0ZM479.2 640.9a1.7 1.7 0 1 0 3.4 0a1.7 1.7 0 1 0 -3.4 0ZM487.9 650.8a1.7 1.7 0 1 0 3.4 0a1.7 1.7 0 1 0 -3.4 0ZM526.6 619.9a1.7 1.7 0 1 0 3.4 0a1.7 1.7 0 1 0 -3.4 0ZM529.6 633.8a1.7 1.7 0 1 0 3.4 0a1.7 1.7 0 1 0 -3.4 0ZM539 631.9a1.7 1.7 0 1 0 3.4 0a1.7 1.7 0 1 0 -3.4 0ZM411.8 682.1a1.7 1.7 0 1 0 3.4 0a1.7 1.7 0 1 0 -3.4 0ZM417.7 691a1.7 1.7 0 1 0 3.4 0a1.7 1.7 0 1 0 -3.4 0ZM526 684.2a1.7 1.7 0 1 0 3.4 0a1.7 1.7 0 1 0 -3.4 0ZM520.9 695.1a1.7 1.7 0 1 0 3.4 0a1.7 1.7 0 1 0 -3.4 0ZM432.8 711.8a1.7 1.7 0 1 0 3.4 0a1.7 1.7 0 1 0 -3.4 0ZM428.5 721.3a1.7 1.7 0 1 0 3.4 0a1.7 1.7 0 1 0 -3.4 0ZM436.8 722.7a1.7 1.7 0 1 0 3.4 0a1.7 1.7 0 1 0 -3.4 0ZM441.9 719.2a1.7 1.7 0 1 0 3.4 0a1.7 1.7 0 1 0 -3.4 0ZM465.3 733.2a1.7 1.7 0 1 0 3.4 0a1.7 1.7 0 1 0 -3.4 0ZM452.6 744.2a1.7 1.7 0 1 0 3.4 0a1.7 1.7 0 1 0 -3.4 0ZM459.7 754.7a1.7 1.7 0 1 0 3.4 0a1.7 1.7 0 1 0 -3.4 0ZM510.1 676.3L511.2 679.5L514.5 680.5L511.7 682.5L511.8 686L509 684L505.8 685.1L506.8 681.9L504.7 679.1L508.2 679.1ZM407.8 723.2L409.9 726.2L413.6 726.2L411.4 729.2L412.5 732.7L409 731.5L406 733.6L406.1 729.9L403.1 727.7L406.7 726.7ZM512.3 658.4a1.9 1.9 0 1 0 3.8 0a1.9 1.9 0 1 0 -3.8 0ZM516.1 651a1.5 1.5 0 1 0 3 0a1.5 1.5 0 1 0 -3 0ZM531 656.6a1.6 1.6 0 1 0 3.2 0a1.6 1.6 0 1 0 -3.2 0ZM525.7 670.6a1.3 1.3 0 1 0 2.6 0a1.3 1.3 0 1 0 -2.6 0ZM519.4 646a1.2 1.2 0 1 0 2.4 0a1.2 1.2 0 1 0 -2.4 0ZM509.1 727.6a1.3 1.3 0 1 0 2.6 0a1.3 1.3 0 1 0 -2.6 0Z" fill="#05051a" stroke="#05051a" stroke-width="1.5" stroke-linejoin="round"/>
<path d="M415.4 607.8C405 614 400.4 620 400.2 628V642.6M401.8 743.8C401.6 752 404.6 760.6 416.4 764.6M544 744.4C544.4 752 542 760.6 531.2 764.8M419 747.6C411 749.6 409.6 754.4 414.6 758.4C424 764.6 444 767 464.2 767.3M467.6 767.3H478.2M484.2 767.3C502 767 518 765 528.6 760.6C537 757 538.6 752.4 532.8 748.6M484.2 743.4Q496 744.6 508.6 744.4M487.3 608.9L491.3 614.1L497.7 613.1L494 618.5L497 624.4L490.7 622.5L486 627.1L485.9 620.5L480 617.5L486.2 615.4ZM498.6 617.4C510 618.4 519 624 525.6 634.6L519.6 631.2 520.4 637 516.6 633 515.4 639.4C511.6 630.6 505 624.6 495.2 622.2M499.6 620.4C507.6 622 513.4 626 517.6 632M415.8 650.2a11.6 11.6 0 1 0 23.2 0a11.6 11.6 0 1 0 -23.2 0ZM416.4 656.4C409 659.6 403.6 663 404.4 664.8C405.6 667.4 418 665.4 431 660.2C444 655 452.6 648.6 451.6 646C450.8 644.2 445.6 644.6 438.6 646.4M418.6 648.4Q426 643.2 433.6 642M418.4 657.4Q430 654 438.6 647.6M423.4 661.2Q433 658.8 438.2 654.4M449.6 687.6a14.6 14.6 0 1 0 29.2 0a14.6 14.6 0 1 0 -29.2 0ZM451.2 687.6a13 13 0 1 0 26 0a13 13 0 1 0 -26 0ZM461.2 678.2C453.2 681.6 453.2 695.6 465.8 697.8M466.2 676.6C472.2 678.6 474.6 683.6 474.8 688.6M461.6 672.6Q461.2 664 469.8 656.1Q475.1 666.4 471.8 674.4M467.2 670.7L468.4 663.5M473.4 675.5Q479.4 669.3 491 670.2Q487.1 681.1 479 684.1M478.6 678.2L484.7 674.3M479.2 685Q487.3 684.9 494.7 693Q485 698 477.4 695.2M481.1 690.6L487.7 691.7M476.1 697Q476.9 701.7 476.4 707.1Q471.3 705.2 467.4 702.5M473.3 702.2L474.5 704.1M473.3 699.8Q478.1 707.6 473.8 719.2Q463.8 712 463.5 702.8M469.2 704L471.5 711.5M461 702.5Q457.9 709.4 448.3 713Q447.3 702.8 452.3 697M455.1 702.2L451.8 707.4M450.8 694.7Q442.3 698.2 431.5 692.2Q440.2 683.4 449.3 684.5M447.2 690L439.5 691.1M450.1 681.9Q443.8 677.6 441.9 667.5Q452.1 668.4 457 674.2M451.4 676.1L446.9 672M456.4 674.5L456.8 664.8L462.8 672.5M469.4 673.3L477.3 667.5L475.1 677M478.2 681.7L488.8 683.3L479.4 688.3M478.6 692.6L484.6 700.3L475 698.3M465.5 702.7L461 710.4L458.8 701.8M453.4 698.3L444.7 699.8L449.8 692.6M449 686.5L441.2 680.6L451 680M455.5 675.1L454.8 664.4L461.8 672.6M539.7 656.1Q539.1 659.2 539.4 662.2Q539.6 665.1 537.7 667.3Q535.7 669.5 533.8 671.8Q532 674.1 529.1 674.5Q526.2 674.9 523.3 675.6Q520.4 676.4 518 674.5Q515.7 672.6 512.8 671.6Q509.9 670.5 509.4 667.5Q508.9 664.5 507.4 661.8Q505.9 659.2 507.4 656.6Q508.9 653.9 509.5 651Q510.2 648.2 512.9 646.8Q515.5 645.5 517.9 643.5Q520.3 641.5 523.2 642.7Q526.1 643.9 529.1 644.1Q532.1 644.2 533.9 646.5Q535.7 648.9 538 651Q540.4 653 539.7 656.1ZM528.3 662.6a2.3 2.3 0 1 0 4.6 0a2.3 2.3 0 1 0 -4.6 0ZM521.4 661.4a3 3 0 1 0 1.6 5.4M526.6 653.4l-2 1.6 2.6.8M529.6 648.8a1.8 1.8 0 0 0 2.8 2M504.8 730.3a19.4 19.4 0 1 0 38.8 0a19.4 19.4 0 1 0 -38.8 0ZM507.2 721.6Q518 716 530.6 712.6M505.4 730C512 727 515 722.4 519.4 722.8C523 723 524 719.4 528 719C532 718.6 533.6 715.4 540.6 716.2M506.4 737.6C512 735.4 515 731 519.4 731.2C523 731.4 525 727.6 529 727.2C533 726.8 536 723.6 543 723.4M509.4 743.6C515 741 518 737 522.4 737.2C526 737.4 528 734 532 733.6C536 733.2 538 730 543.4 730.4M514.4 747.4Q528 744 541 738.4M521.6 749.4Q530 748 536.6 745M418.8 744.4a12.6 12.6 0 1 0 25.2 0a12.6 12.6 0 1 0 -25.2 0ZM425.4 738.2Q431 735.4 437.4 734.6M421.4 746.4Q430 740 441.4 739.2M424.4 751.4Q432 744.6 443.4 743.6M428.4 754.8Q434 749.4 443 748.2M433 756.4Q436.4 753 439.6 752.4" stroke="#e6e6e6" stroke-width="1.05" fill="none" stroke-linecap="round" stroke-linejoin="round"/>
<path d="M422.8 620.1C423.1 623.7 423.9 624.7 426.8 625.1C423.9 625.5 423.1 626.5 422.8 630.1C422.5 626.5 421.7 625.5 418.8 625.1C421.7 624.7 422.5 623.7 422.8 620.1ZM445.1 613.4C445.6 620.7 447 622.8 451.9 623.6C447 624.4 445.6 626.5 445.1 633.8C444.6 626.5 443.2 624.4 438.3 623.6C443.2 622.8 444.6 620.7 445.1 613.4ZM459 627.5C459.3 631.5 460.2 632.7 463.3 633.1C460.2 633.5 459.3 634.7 459 638.7C458.7 634.7 457.8 633.5 454.7 633.1C457.8 632.7 458.7 631.5 459 627.5ZM498.3 657.4C498.6 661.3 499.4 662.5 502.3 662.9C499.4 663.3 498.6 664.5 498.3 668.4C498 664.5 497.2 663.3 494.3 662.9C497.2 662.5 498 661.3 498.3 657.4ZM423.2 670.6C423.6 676.3 424.8 678 428.7 678.6C424.8 679.2 423.6 680.9 423.2 686.6C422.8 680.9 421.6 679.2 417.7 678.6C421.6 678 422.8 676.3 423.2 670.6ZM536.6 682.6C537.1 688.7 538.3 690.4 542.6 691.1C538.3 691.8 537.1 693.5 536.6 699.6C536.1 693.5 534.9 691.8 530.6 691.1C534.9 690.4 536.1 688.7 536.6 682.6ZM503.2 693.4C503.5 697 504.3 698 507.2 698.4C504.3 698.8 503.5 699.8 503.2 703.4C502.9 699.8 502.1 698.8 499.2 698.4C502.1 698 502.9 697 503.2 693.4ZM416.6 702.9C416.9 707.2 417.7 708.4 420.6 708.9C417.7 709.4 416.9 710.6 416.6 714.9C416.3 710.6 415.5 709.4 412.6 708.9C415.5 708.4 416.3 707.2 416.6 702.9ZM492.7 721.4C493.2 728.2 494.6 730.2 499.2 730.9C494.6 731.6 493.2 733.6 492.7 740.4C492.2 733.6 490.8 731.6 486.2 730.9C490.8 730.2 492.2 728.2 492.7 721.4ZM475.1 738.3C475.5 742.9 476.4 744.3 479.6 744.8C476.4 745.3 475.5 746.7 475.1 751.3C474.7 746.7 473.8 745.3 470.6 744.8C473.8 744.3 474.7 742.9 475.1 738.3ZM468.1 621.1a1.7 1.7 0 1 0 3.4 0a1.7 1.7 0 1 0 -3.4 0ZM494.7 636.2a1.7 1.7 0 1 0 3.4 0a1.7 1.7 0 1 0 -3.4 0ZM479.2 640.9a1.7 1.7 0 1 0 3.4 0a1.7 1.7 0 1 0 -3.4 0ZM487.9 650.8a1.7 1.7 0 1 0 3.4 0a1.7 1.7 0 1 0 -3.4 0ZM526.6 619.9a1.7 1.7 0 1 0 3.4 0a1.7 1.7 0 1 0 -3.4 0ZM529.6 633.8a1.7 1.7 0 1 0 3.4 0a1.7 1.7 0 1 0 -3.4 0ZM539 631.9a1.7 1.7 0 1 0 3.4 0a1.7 1.7 0 1 0 -3.4 0ZM411.8 682.1a1.7 1.7 0 1 0 3.4 0a1.7 1.7 0 1 0 -3.4 0ZM417.7 691a1.7 1.7 0 1 0 3.4 0a1.7 1.7 0 1 0 -3.4 0ZM526 684.2a1.7 1.7 0 1 0 3.4 0a1.7 1.7 0 1 0 -3.4 0ZM520.9 695.1a1.7 1.7 0 1 0 3.4 0a1.7 1.7 0 1 0 -3.4 0ZM432.8 711.8a1.7 1.7 0 1 0 3.4 0a1.7 1.7 0 1 0 -3.4 0ZM428.5 721.3a1.7 1.7 0 1 0 3.4 0a1.7 1.7 0 1 0 -3.4 0ZM436.8 722.7a1.7 1.7 0 1 0 3.4 0a1.7 1.7 0 1 0 -3.4 0ZM441.9 719.2a1.7 1.7 0 1 0 3.4 0a1.7 1.7 0 1 0 -3.4 0ZM465.3 733.2a1.7 1.7 0 1 0 3.4 0a1.7 1.7 0 1 0 -3.4 0ZM452.6 744.2a1.7 1.7 0 1 0 3.4 0a1.7 1.7 0 1 0 -3.4 0ZM459.7 754.7a1.7 1.7 0 1 0 3.4 0a1.7 1.7 0 1 0 -3.4 0ZM510.1 676.3L511.2 679.5L514.5 680.5L511.7 682.5L511.8 686L509 684L505.8 685.1L506.8 681.9L504.7 679.1L508.2 679.1ZM407.8 723.2L409.9 726.2L413.6 726.2L411.4 729.2L412.5 732.7L409 731.5L406 733.6L406.1 729.9L403.1 727.7L406.7 726.7ZM512.3 658.4a1.9 1.9 0 1 0 3.8 0a1.9 1.9 0 1 0 -3.8 0ZM516.1 651a1.5 1.5 0 1 0 3 0a1.5 1.5 0 1 0 -3 0ZM531 656.6a1.6 1.6 0 1 0 3.2 0a1.6 1.6 0 1 0 -3.2 0ZM525.7 670.6a1.3 1.3 0 1 0 2.6 0a1.3 1.3 0 1 0 -2.6 0ZM519.4 646a1.2 1.2 0 1 0 2.4 0a1.2 1.2 0 1 0 -2.4 0ZM509.1 727.6a1.3 1.3 0 1 0 2.6 0a1.3 1.3 0 1 0 -2.6 0Z" fill="#f4f4f2"/>
</g>
</svg>

<!-- selection box -->
<svg class="abs" style="left:0;top:0" width="1376" height="857" viewBox="0 0 1376 857"><rect x="365.4" y="262.1" width="216.7" height="285.7" fill="none" stroke="#9b9b9b" stroke-width="2.9"/></svg>
<div class="abs hd" style="left:359.3px;top:255.6px"></div>
<div class="abs hd" style="left:575.9px;top:255.6px"></div>
<div class="abs hd" style="left:359.3px;top:542px"></div>
<div class="abs hd" style="left:575.9px;top:542px"></div>
<div class="abs" style="left:426.5px;top:224.4px;width:94.6px;height:21.3px;border-radius:4.5px;background:#242424;color:#fff;font-size:12px;line-height:25.4px;letter-spacing:.13px;overflow:hidden;text-align:center;white-space:pre;-webkit-text-stroke:.2px #fff">4  in x 5.3  in</div>
<!-- scrollbars -->
<div class="abs" style="left:1054px;top:115px;width:17px;height:741px;background:#f1f1f1"></div>
<div class="abs" style="left:1058.5px;top:122px;width:0;height:0;border-left:4px solid transparent;border-right:4px solid transparent;border-bottom:4.5px solid #a3a3a3"></div>
<div class="abs" style="left:1056px;top:132px;width:13px;height:37px;background:#c1c1c1"></div>
<div class="abs" style="left:1058.5px;top:828px;width:0;height:0;border-left:4px solid transparent;border-right:4px solid transparent;border-top:4.5px solid #505050"></div>
<div class="abs" style="left:71px;top:839px;width:983px;height:17px;background:#f1f1f1"></div>
<div class="abs" style="left:76.5px;top:843.5px;width:0;height:0;border-top:4px solid transparent;border-bottom:4px solid transparent;border-right:4.5px solid #a3a3a3"></div>
<div class="abs" style="left:88px;top:841px;width:68px;height:13px;background:#c1c1c1"></div>
<div class="abs" style="left:1043.5px;top:843.5px;width:0;height:0;border-top:4px solid transparent;border-bottom:4px solid transparent;border-left:4.5px solid #505050"></div>
<div class="abs" style="left:1054px;top:839px;width:17px;height:17px;background:#dcdcdc"></div>
<!-- zoom control -->
<div class="abs" style="left:103px;top:797px;width:109px;height:34px;border-radius:17px;background:rgba(205,205,205,.36)"></div>
<svg class="ic" style="left:109px;top:803px;stroke:rgba(140,140,150,.55);stroke-width:1.5" width="22" height="22" viewBox="0 0 22 22"><circle cx="11" cy="11" r="9.3"/><path d="M6 11h10"/></svg>
<div class="t" style="left:137px;top:803px;font-size:21.5px;font-weight:400;color:#b7b7bc;-webkit-text-stroke:.55px #b7b7bc;letter-spacing:-.9px;will-change:transform;margin-top:.3px">75%</div>
<svg class="ic" style="left:184px;top:803px;stroke:rgba(140,140,150,.55);stroke-width:1.5" width="22" height="22" viewBox="0 0 22 22"><circle cx="11" cy="11" r="9.3"/><path d="M6 11h10M11 6v10"/></svg>
<div id="cv-top"></div>
<div id="cv-left"></div>

</div>
<div class="layer" id="panel">
  <div id="p-line"></div>
  <div class="ptab" style="left:1090.6px;color:#00845d;-webkit-text-stroke:.4px #00845d;letter-spacing:-.05px;font-size:14.6px">Layers</div>
  <div class="ptab" style="left:1166.5px;color:#444;font-size:14.6px">Color Sync</div>
  <div class="abs" style="left:1074px;top:112px;width:301px;height:1px;background:#e0e0e0"></div>
  <div class="abs" style="left:1075px;top:109.5px;width:75px;height:3px;background:#00845d"></div>
  <svg class="ic" style="left:1092px;top:126px;stroke:#444;stroke-width:1.4;stroke-linejoin:miter" width="22" height="22" viewBox="0 0 22 22"><path d="M2.5 6.5v-4h4M15.5 2.5h4v4M19.5 15.5v4h-4M6.5 19.5h-4v-4" stroke-linecap="butt"/><rect x="5.8" y="5.8" width="7" height="7" rx="1.5"/><rect x="9.3" y="9.3" width="7" height="7" rx="1.5" fill="#fff"/></svg>
  <svg class="ic" style="left:1132px;top:126px;stroke:#444;stroke-width:1.4;stroke-linejoin:miter" width="22" height="22" viewBox="0 0 22 22"><path d="M6.5 15.5h-4v-13h13v4"/><rect x="6.5" y="6.5" width="13" height="13" fill="#fff"/><path d="M13 10v6M10 13h6"/></svg>
  <svg class="ic" style="left:1172px;top:126px;stroke:#444;stroke-width:1.4" width="22" height="22" viewBox="0 0 22 22"><path d="M1.8 6.2h18.4M7.8 6V3.5c0-.5.3-.8.8-.8h4.8c.5 0 .8.3.8.8V6M4.2 6.5l1 11.5c.1 1 .7 1.5 1.7 1.5h8.2c1 0 1.6-.5 1.7-1.5l1-11.5M9.3 10v5.5M12.7 10v5.5"/></svg>
  <div class="abs" style="left:1075px;top:162px;width:300px;height:1px;background:#e2e2e2"></div>

  <div class="lay sel" style="top:166.2px"></div>
  <svg class="ic" style="left:1114px;top:184px;stroke:#444;stroke-width:1.6;stroke-linecap:butt" width="18" height="18" viewBox="0 0 18 18"><path d="M2.7 5.4V2.6h12.6v2.8M5.4 15.5h7.2"/><path d="M9 2.6v12.9" stroke-width="2.2"/></svg>
  <div class="ln b" style="top:175.5px">Beyond</div>
  <div class="ln g" style="top:195.5px">Basic Cut</div>

  <div class="lay sel" style="top:224.2px"></div>
  <svg class="abs" style="left:1111px;top:239px" width="24" height="24" viewBox="0 0 24 24"><path d="M4.7 0.9L5.9 3.2L8.4 3.6L6.6 5.4L7.1 8L4.7 6.8L2.4 8L2.9 5.5L1 3.7L3.5 3.3ZM19.5 2L20.5 4.1L22.8 4.5L21.1 6.1L21.5 8.4L19.4 7.3L17.3 8.4L17.8 6.1L16.1 4.4L18.4 4.1ZM12.5 7.5L13.4 9.3L15.4 9.6L14 11L14.3 13L12.5 12L10.8 13L11.1 11L9.7 9.6L11.7 9.3ZM12.7 15.9L13.5 17.6L15.4 17.9L14.1 19.2L14.4 21.1L12.7 20.2L11 21.1L11.3 19.2L9.9 17.9L11.8 17.6ZM6.2 13.1L6.8 14.3L8.1 14.5L7.1 15.4L7.4 16.7L6.2 16.1L5 16.7L5.2 15.4L4.3 14.5L5.6 14.3ZM4.3 10L4.7 10.8L5.6 11L4.9 11.6L5.1 12.6L4.3 12.1L3.4 12.6L3.6 11.6L2.9 11L3.8 10.8ZM17.6 10.2L18.1 11.2L19.2 11.4L18.4 12.2L18.6 13.3L17.6 12.8L16.6 13.3L16.8 12.2L16 11.4L17.1 11.2ZM7.6 9.1L8.1 9.7L8.8 9.6L8.4 10.2L8.7 10.8L8.1 10.7L7.5 11.2L7.5 10.5L6.8 10.1L7.5 9.8ZM17.3 1.3L17.5 1.9L18.2 2.1L17.7 2.5L17.8 3.2L17.2 2.8L16.6 3.1L16.7 2.5L16.3 2L16.9 1.9ZM12.1 0.9L12.3 1.5L12.9 1.7L12.4 2.1L12.4 2.7L11.9 2.3L11.3 2.5L11.5 1.9L11.1 1.4L11.8 1.4ZM11.8 3.2L12.1 3.8L12.7 3.9L12.3 4.3L12.4 4.9L11.8 4.6L11.3 4.9L11.4 4.3L10.9 3.9L11.5 3.8ZM8.7 5.5L9 6L9.7 5.9L9.3 6.5L9.6 7L8.9 6.9L8.5 7.3L8.4 6.6L7.9 6.3L8.5 6.1ZM15.1 5.6L15.2 6.2L15.7 6.5L15.2 6.8L15.1 7.4L14.6 7L14 7.1L14.3 6.5L14 5.9L14.6 6.1ZM20 14.5L20.2 15.2L20.9 15.4L20.3 15.8L20.4 16.5L19.8 16.1L19.1 16.4L19.3 15.7L18.9 15.1L19.6 15.1ZM16.1 15.1L16.2 15.8L16.9 16L16.3 16.4L16.2 17L15.7 16.6L15.1 16.7L15.3 16.1L15 15.5L15.7 15.6ZM10.1 15.1L10.5 15.6L11.1 15.5L10.7 16.1L10.9 16.7L10.3 16.5L9.8 16.8L9.8 16.2L9.3 15.9L9.9 15.7ZM2.6 13.5L2.9 14L3.6 14.1L3.1 14.5L3.3 15.1L2.7 14.9L2.2 15.2L2.2 14.6L1.8 14.2L2.4 14ZM2.9 17L3.2 17.5L3.8 17.5L3.5 18L3.6 18.6L3.1 18.4L2.5 18.8L2.6 18.1L2.1 17.8L2.7 17.6ZM6 18.8L6.3 19.4L6.9 19.5L6.5 19.9L6.6 20.5L6 20.2L5.5 20.5L5.6 19.9L5.1 19.5L5.8 19.4ZM20.3 17.1L20.5 17.6L21.2 17.7L20.7 18.2L20.8 18.8L20.3 18.5L19.7 18.8L19.8 18.2L19.4 17.7L20 17.6ZM21.1 9L21.3 9.6L21.9 9.8L21.3 10.2L21.3 10.8L20.8 10.4L20.2 10.6L20.4 10L20.1 9.5L20.7 9.5ZM7.2 1.1L7.3 1.7L7.9 2L7.3 2.3L7.3 2.9L6.8 2.5L6.2 2.6L6.5 2L6.2 1.5L6.8 1.6ZM9.7 2L10.1 2.5L10.7 2.5L10.3 3L10.5 3.6L9.9 3.4L9.4 3.8L9.4 3.2L8.9 2.8L9.5 2.6ZM15 2.4L15.1 3L15.7 3.2L15.2 3.5L15.2 4.2L14.7 3.8L14.1 3.9L14.3 3.3L14 2.8L14.6 2.9ZM4.8 7.8L5.2 8.3L5.8 8.3L5.4 8.8L5.6 9.4L5 9.2L4.5 9.6L4.5 8.9L4 8.6L4.6 8.4ZM8.8 12.3L9 12.9L9.6 13.1L9.1 13.4L9.1 14L8.6 13.7L8 13.8L8.2 13.3L7.8 12.7L8.5 12.8ZM14.2 13.6L14.4 14.3L14.9 14.5L14.4 14.8L14.3 15.5L13.9 15L13.3 15.2L13.5 14.6L13.2 14L13.8 14.1ZM20.3 11.9L20.7 12.4L21.3 12.4L21 12.9L21.2 13.5L20.6 13.3L20.1 13.7L20.1 13.1L19.6 12.7L20.2 12.5ZM8.3 17.6L8.5 18.2L9.1 18.4L8.6 18.8L8.6 19.4L8.1 19L7.5 19.2L7.7 18.6L7.3 18.1L8 18.1ZM3 19.7L3.4 20.1L4 20.1L3.6 20.6L3.9 21.2L3.3 21L2.8 21.4L2.8 20.8L2.2 20.5L2.8 20.3ZM8.8 19.6L9 20.2L9.6 20.4L9.2 20.8L9.2 21.4L8.7 21.1L8.1 21.3L8.3 20.7L7.8 20.2L8.5 20.2ZM16.2 19.8L16.4 20.4L17 20.6L16.5 21L16.5 21.6L16 21.2L15.4 21.4L15.6 20.8L15.2 20.3L15.9 20.3ZM17.6 18.1L17.8 18.8L18.3 19L17.8 19.3L17.7 19.9L17.3 19.5L16.7 19.6L16.9 19.1L16.6 18.5L17.2 18.6ZM19.9 19.1L20.1 19.7L20.7 19.9L20.2 20.3L20.2 20.9L19.7 20.5L19.1 20.7L19.3 20.1L18.9 19.6L19.5 19.6Z" fill="#1c2082" stroke="#0b0c3a" stroke-width=".45" stroke-linejoin="round"/></svg>
  <div class="ln b" style="top:233.5px">Stars</div>
  <div class="ln g" style="top:253.5px">Basic Cut</div>

  <svg class="abs" style="left:0;top:0" width="1376" height="857" viewBox="0 0 1376 857"><rect x="1114.5" y="298.3" width="16.5" height="22" rx="2.2" fill="#05050f"/><use href="#jar" transform="translate(1071.4 240.6) scale(.1084 .1032)" opacity=".55"/><path d="M1115.3 298H1130.2V302.7H1115.3Z" fill="#07070f"/><path d="M1117 306.5l2.5 1.5M1124 305.5l3 2M1119.5 311.5a3.2 3.2 0 1 0 6 0M1116.5 315.5l3 1.5M1125 316l3.5 1M1120 318.5h4" stroke="#05050f" stroke-width="1.3" fill="none" opacity=".7"/></svg>
  <div class="ln" style="top:291.3px;color:#444;font-size:13.8px;letter-spacing:.1px">Galaxy Jar</div>
  <div class="ln g" style="top:311.5px">Basic Cut</div>

  <!-- panel scrollbar -->
  <div class="abs" style="left:1358px;top:163px;width:17px;height:594px;background:#f1f1f1"></div>
  <div class="abs" style="left:1362.5px;top:169.8px;width:0;height:0;border-left:4px solid transparent;border-right:4px solid transparent;border-bottom:4.5px solid #a3a3a3"></div>
  <div class="abs" style="left:1362.5px;top:746.5px;width:0;height:0;border-left:4px solid transparent;border-right:4px solid transparent;border-top:4.5px solid #a3a3a3"></div>

  <div class="abs" style="left:1075px;top:757px;width:300px;height:50px;background:#f4f4f4"></div>
  <div class="abs" style="left:1085px;top:764px;width:53px;height:36px;border:1px solid #8c8c8c;border-radius:2px;background:#fff"></div>
  <div class="t" style="left:1148.2px;top:778.6px;font-size:9.6px;color:#333;transform:scaleX(1.075);transform-origin:0 50%;will-change:transform">Blank Canvas</div>

  <svg class="ic" style="left:1098px;top:811px;stroke:#2b2b2b;stroke-width:1.5;stroke-linejoin:miter;stroke-linecap:butt" width="22" height="22" viewBox="0 0 22 22"><path d="M13.3 4.7A6.2 6.2 0 1 0 5.2 14.1"/><path d="M16 8.6H19.5V19.5H8.5V17.1"/><path d="M8.5 9.1H15A6.2 6.2 0 0 1 8.5 15.1Z" stroke-linejoin="round"/></svg>
  <div class="bl" style="left:1079px;top:836.8px">Slice</div>
  <svg class="ic" style="left:1152px;top:811px;stroke:#2b2b2b;stroke-width:1.5" width="22" height="22" viewBox="0 0 22 22"><rect x="2.7" y="2.8" width="10.9" height="10.9" rx=".6"/><circle cx="13.6" cy="13.6" r="5.9"/></svg>
  <div class="abs" style="left:1177px;top:821.8px;width:0;height:0;border-left:4px solid transparent;border-right:4px solid transparent;border-top:4.2px solid #2b2b2b"></div>
  <div class="bl" style="left:1138px;top:836.8px">Combine</div>
  <svg class="ic" style="left:1213px;top:811px;stroke:#2b2b2b;stroke-width:1.5" width="24" height="22" viewBox="0 0 24 22"><path d="M17.5 8.4H8a2 2 0 0 0 0 4H18.2a3.2 3.2 0 0 0 0-6.4H7.6a4.4 4.4 0 0 0 0 8.8H17.5"/></svg>
  <div class="bl" style="left:1195px;top:836.8px">Attach</div>
  <svg class="ic" style="left:1270px;top:810px;stroke:#2b2b2b;stroke-width:1.5;stroke-linejoin:miter" width="24" height="24" viewBox="0 0 24 24"><path d="M12.1 2.2V9M9.1 6.2l3 3 3-3"/><path d="M6.7 9.2 3.6 11.1l8.5 4.6 8.5-4.6-3.1-1.9"/><path d="M5.8 13.7 3.6 15l8.5 4.8 8.5-4.8-2.2-1.3"/></svg>
  <div class="bl" style="left:1251px;top:836.8px">Flatten</div>
  <svg class="ic" style="left:1330px;top:811px;stroke:#c6c6c6;stroke-width:1.5;stroke-linecap:butt" width="22" height="22" viewBox="0 0 22 22"><circle cx="10.9" cy="10.9" r="9.3" stroke-dasharray="5 2.3"/></svg>
  <div class="bl" style="left:1311px;top:836.8px;color:#cdcdcd">Contour</div>
</div>

<div id="frame"></div>
</div>
</body>
</html>
